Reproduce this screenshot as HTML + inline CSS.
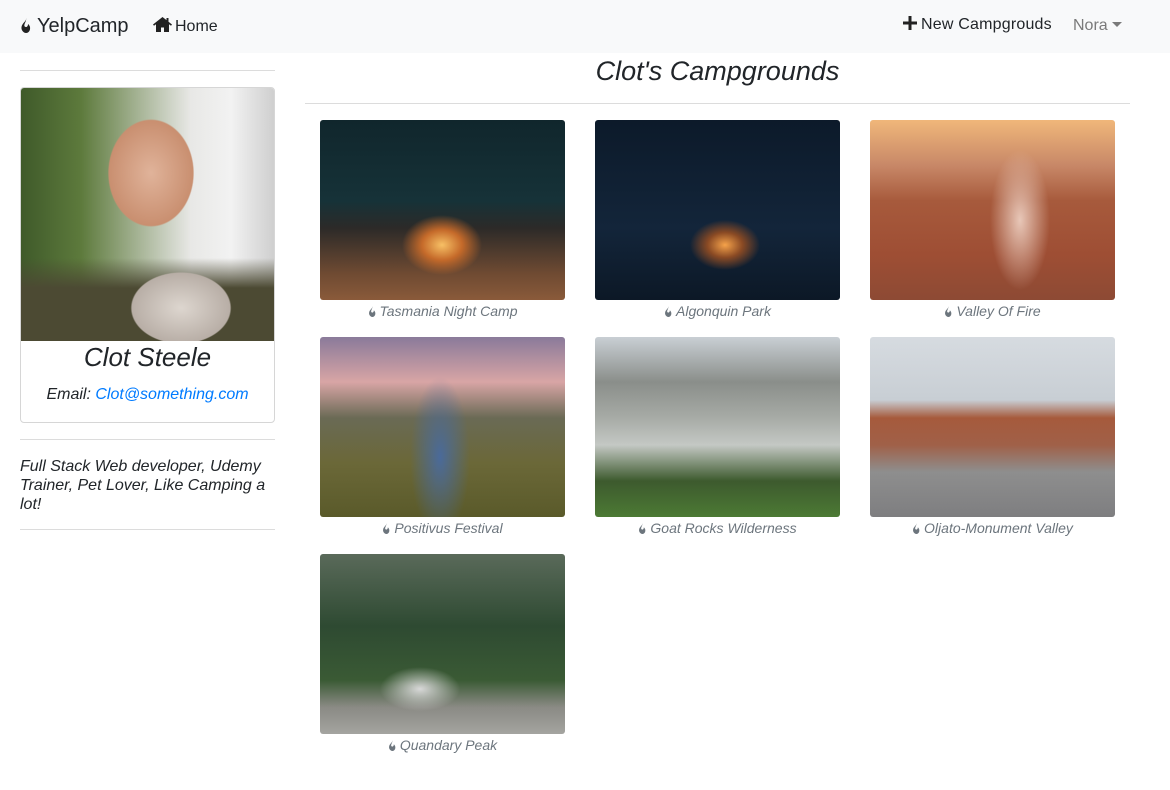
<!DOCTYPE html>
<html><head><meta charset="utf-8"><style>
*{box-sizing:border-box}body{margin:0;width:1170px;height:790px;background:#fff;font-family:"Liberation Sans",sans-serif;color:#212529;position:relative;overflow:hidden}
.nav{position:absolute;left:0;top:0;width:1170px;height:53px;background:#f8f9fa}
.a{position:absolute;font-size:16px;white-space:nowrap}
hr{position:absolute;margin:0;border:0;border-top:1px solid #dcdcdc;height:0}
.card{position:absolute;left:20px;top:87px;width:255px;height:336px;border:1px solid #d6d6d6;border-radius:4px;overflow:hidden}
.img{position:absolute;width:245px;height:180px;border-radius:3px}
.cap{position:absolute;width:245px;text-align:center;font-style:italic;font-size:14px;color:#6c757d}
.cap svg{vertical-align:-1px;margin-right:4px}
</style></head><body>
<div class="nav">
<div class="a" style="left:20px;top:15px;font-size:20px"><svg width="11" height="15" viewBox="0 0 11 15" style="vertical-align:-1px;margin-right:6px"><path d="M6 0C7 3 2 5 1.5 9 1 12 3.5 15 6 15 9 15 10.5 12 10 9 9.5 7 8 6 8 6 8 8 7 9 6 9 4 9 4 7 5 5 6 3 6.5 1 6 0Z" fill="#222"/></svg>YelpCamp</div>
<div class="a" style="left:153px;top:17px"><svg width="19" height="15" viewBox="0 0 19 15" style="vertical-align:-1px;margin-right:3px"><path d="M9.5 0 0 7.5 1 8.7 3 7.2V15H8V10.5H11V15H16V7.2L18 8.7 19 7.5 15.5 4.7V1H13.5V3.1Z" fill="#222"/></svg>Home</div>
<div class="a" style="left:903px;top:16px;letter-spacing:0.2px"><svg width="14" height="14" viewBox="0 0 14 14" style="vertical-align:-1px;margin-right:4px"><path d="M5.5 0h3v5.5H14v3H8.5V14h-3V8.5H0v-3h5.5z" fill="#222"/></svg>New Campgrouds</div>
<div class="a" style="left:1073px;top:17px;color:#7a7a7a">Nora <span style="display:inline-block;border-left:5px solid transparent;border-right:5px solid transparent;border-top:5px solid #7a7a7a;vertical-align:3px"></span></div>
</div>
<hr style="left:20px;top:70px;width:255px">
<div class="card">
<div style="position:absolute;left:0;top:0;width:253px;height:253px;background:radial-gradient(ellipse 60px 75px at 130px 85px,#e0b39a 0,#c98f70 70%,transparent 72%),radial-gradient(ellipse 70px 50px at 160px 220px,#ddd6cf 0,#b8aea6 70%,transparent 72%),linear-gradient(180deg,transparent 0,transparent 170px,#4c4a33 200px),linear-gradient(90deg,#3f5a2a 0,#5d7a3c 60px,#e8e8e6 170px,#f2f2f2 210px,#cfcfcf 253px)"></div>
<div style="position:absolute;top:254px;width:100%;text-align:center;font-style:italic;font-size:26px">Clot Steele</div>
<div style="position:absolute;top:298px;width:100%;text-align:center;font-style:italic;font-size:16px">Email: <span style="color:#007bff">Clot@something.com</span></div>
</div>
<hr style="left:20px;top:439px;width:255px">
<div class="a" style="left:20px;top:457px;width:270px;font-style:italic;line-height:19px;font-size:16px">Full Stack Web developer, Udemy<br>Trainer, Pet Lover, Like Camping a<br>lot!</div>
<hr style="left:20px;top:529px;width:255px">
<div class="a" style="left:305px;top:56px;width:825px;text-align:center;font-size:27px;font-style:italic">Clot's Campgrounds</div>
<hr style="left:305px;top:103px;width:825px">

<div class="img" style="left:320px;top:120px;background:radial-gradient(ellipse 40px 30px at 122px 125px,#f7c065,#c56a2a 50%,transparent 100%),linear-gradient(180deg,#10262c 0,#163238 45%,#2c2a28 60%,#6e4a32 85%,#8a5a3a 100%)"></div>
<div class="img" style="left:595px;top:120px;background:radial-gradient(ellipse 35px 25px at 130px 125px,#f5a24a,#8a4a24 50%,transparent 100%),linear-gradient(180deg,#0c1a2a,#13253a 60%,#0c1826)"></div>
<div class="img" style="left:870px;top:120px;background:radial-gradient(ellipse 30px 70px at 150px 100px,#e8c7b8,transparent),linear-gradient(180deg,#f0b77a 0,#c88868 25%,#a75a3c 45%,#9e4e34 75%,#8d4a34 100%)"></div>
<div class="img" style="left:320px;top:337px;background:radial-gradient(ellipse 30px 80px at 120px 120px,#4a6a9a,transparent),linear-gradient(180deg,#8a7a9a 0,#d8a5a5 25%,#6a6a55 45%,#6b6838 70%,#5a5a2a 100%)"></div>
<div class="img" style="left:595px;top:337px;background:linear-gradient(180deg,#c9cfd4 0,#8a8e8a 25%,#a7aba6 45%,#c4c8c4 60%,#3d5a2e 80%,#4c7a34 100%)"></div>
<div class="img" style="left:870px;top:337px;background:linear-gradient(180deg,#d6dbe0 0,#c8ced4 35%,#a65a3c 45%,#a06048 60%,#8e8e8e 75%,#7e7e80 100%)"></div>
<div class="img" style="left:320px;top:554px;background:radial-gradient(ellipse 40px 22px at 100px 135px,#d8d8d8,transparent),linear-gradient(180deg,#5a6a5a 0,#2e4a32 40%,#3a5a34 70%,#8a8a84 85%,#a4a4a0 100%)"></div>

<div class="cap" style="left:320px;top:303px"><svg width="8" height="11" viewBox="0 0 11 15"><path d="M6 0C7 3 2 5 1.5 9 1 12 3.5 15 6 15 9 15 10.5 12 10 9 9.5 7 8 6 8 6 8 8 7 9 6 9 4 9 4 7 5 5 6 3 6.5 1 6 0Z" fill="#6c757d"/></svg>Tasmania Night Camp</div>
<div class="cap" style="left:595px;top:303px"><svg width="8" height="11" viewBox="0 0 11 15"><path d="M6 0C7 3 2 5 1.5 9 1 12 3.5 15 6 15 9 15 10.5 12 10 9 9.5 7 8 6 8 6 8 8 7 9 6 9 4 9 4 7 5 5 6 3 6.5 1 6 0Z" fill="#6c757d"/></svg>Algonquin Park</div>
<div class="cap" style="left:870px;top:303px"><svg width="8" height="11" viewBox="0 0 11 15"><path d="M6 0C7 3 2 5 1.5 9 1 12 3.5 15 6 15 9 15 10.5 12 10 9 9.5 7 8 6 8 6 8 8 7 9 6 9 4 9 4 7 5 5 6 3 6.5 1 6 0Z" fill="#6c757d"/></svg>Valley Of Fire</div>
<div class="cap" style="left:320px;top:520px"><svg width="8" height="11" viewBox="0 0 11 15"><path d="M6 0C7 3 2 5 1.5 9 1 12 3.5 15 6 15 9 15 10.5 12 10 9 9.5 7 8 6 8 6 8 8 7 9 6 9 4 9 4 7 5 5 6 3 6.5 1 6 0Z" fill="#6c757d"/></svg>Positivus Festival</div>
<div class="cap" style="left:595px;top:520px"><svg width="8" height="11" viewBox="0 0 11 15"><path d="M6 0C7 3 2 5 1.5 9 1 12 3.5 15 6 15 9 15 10.5 12 10 9 9.5 7 8 6 8 6 8 8 7 9 6 9 4 9 4 7 5 5 6 3 6.5 1 6 0Z" fill="#6c757d"/></svg>Goat Rocks Wilderness</div>
<div class="cap" style="left:870px;top:520px"><svg width="8" height="11" viewBox="0 0 11 15"><path d="M6 0C7 3 2 5 1.5 9 1 12 3.5 15 6 15 9 15 10.5 12 10 9 9.5 7 8 6 8 6 8 8 7 9 6 9 4 9 4 7 5 5 6 3 6.5 1 6 0Z" fill="#6c757d"/></svg>Oljato-Monument Valley</div>
<div class="cap" style="left:320px;top:737px"><svg width="8" height="11" viewBox="0 0 11 15"><path d="M6 0C7 3 2 5 1.5 9 1 12 3.5 15 6 15 9 15 10.5 12 10 9 9.5 7 8 6 8 6 8 8 7 9 6 9 4 9 4 7 5 5 6 3 6.5 1 6 0Z" fill="#6c757d"/></svg>Quandary Peak</div>
</body></html>
